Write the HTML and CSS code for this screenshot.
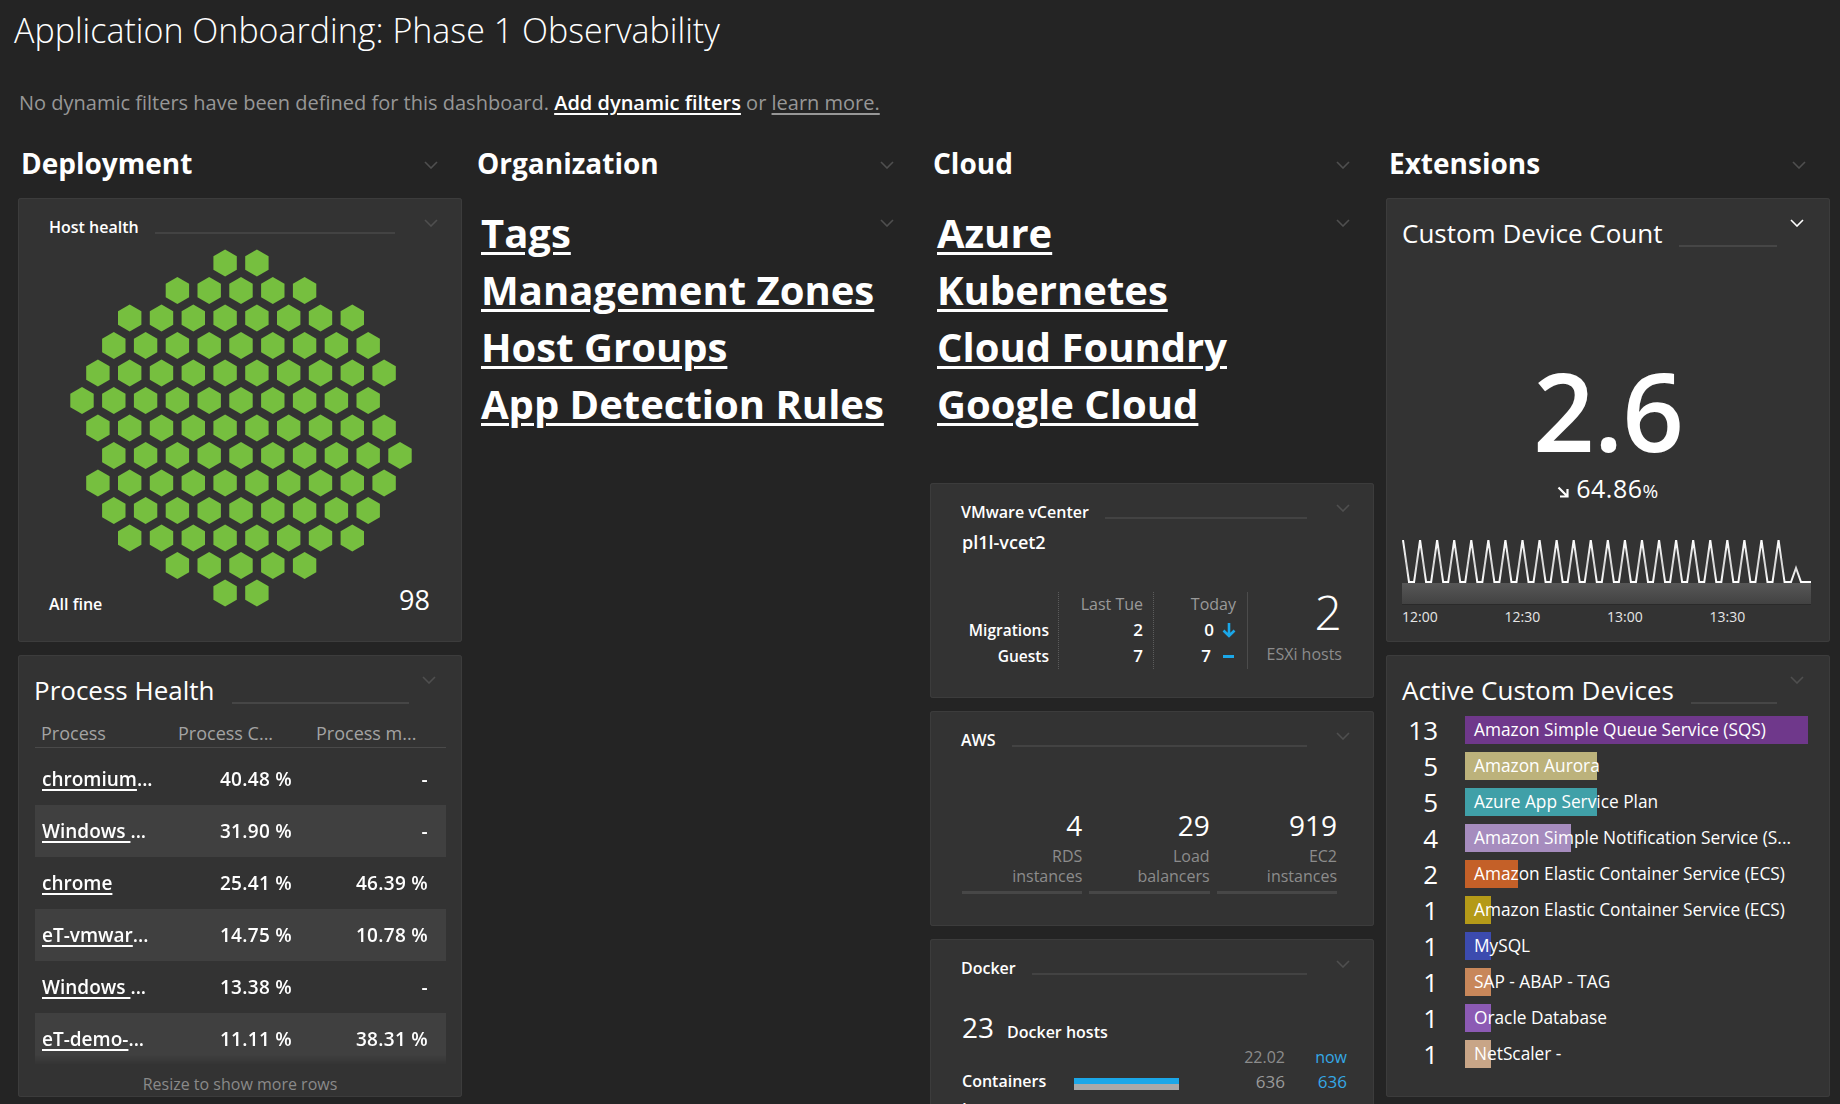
FILE: index.html
```html
<!DOCTYPE html>
<html lang="en">
<head>
<meta charset="utf-8">
<title>Application Onboarding: Phase 1 Observability</title>
<link rel="stylesheet" href="styles.css">
</head>
<body>
<header class="top">
  <h1 class="dash-title">Application Onboarding: Phase 1 Observability</h1>
  <p class="filters">No dynamic filters have been defined for this dashboard. <a class="lnk-strong" href="#">Add dynamic filters</a> or <a class="lnk-muted" href="#">learn more.</a></p>
</header>

<main class="board">
  <!-- Deployment -->
  <section class="col">
    <div class="col-head"><h2>Deployment</h2><svg class="chev" viewBox="0 0 14 8"><polyline points="1,1 7,7 13,1"/></svg></div>

    <div class="tile tile-hh">
      <div class="head-sm"><span class="t">Host health</span><span class="rule"></span><svg class="chev" viewBox="0 0 14 8"><polyline points="1,1 7,7 13,1"/></svg></div>
      <svg class="hexes" viewBox="0 0 444 444" width="444" height="444">
        <defs>
          <polygon id="h" points="0,-13.5 11.7,-6.75 11.7,6.75 0,13.5 -11.7,6.75 -11.7,-6.75"/>
          <g id="ra"><use href="#h" x="143.1"/><use href="#h" x="174.9"/></g>
          <g id="rb"><use href="#h" x="95.4"/><use href="#h" x="127.2"/><use href="#h" x="159"/><use href="#h" x="190.8"/><use href="#h" x="222.6"/></g>
          <g id="rc"><use href="#h" x="47.7"/><use href="#h" x="79.5"/><use href="#h" x="111.3"/><use href="#h" x="143.1"/><use href="#h" x="174.9"/><use href="#h" x="206.7"/><use href="#h" x="238.5"/><use href="#h" x="270.3"/></g>
          <g id="rd"><use href="#h" x="31.8"/><use href="#h" x="63.6"/><use href="#h" x="95.4"/><use href="#h" x="127.2"/><use href="#h" x="159"/><use href="#h" x="190.8"/><use href="#h" x="222.6"/><use href="#h" x="254.4"/><use href="#h" x="286.2"/></g>
          <g id="re"><use href="#h" x="15.9"/><use href="#h" x="47.7"/><use href="#h" x="79.5"/><use href="#h" x="111.3"/><use href="#h" x="143.1"/><use href="#h" x="174.9"/><use href="#h" x="206.7"/><use href="#h" x="238.5"/><use href="#h" x="270.3"/><use href="#h" x="302.1"/></g>
        </defs>
        <g transform="translate(64 65)" fill="#76bf3f">
          <use href="#ra"/>
          <use href="#rb" y="27.5"/>
          <use href="#rc" y="55"/>
          <use href="#rd" y="82.5"/>
          <use href="#re" y="110"/>
          <use href="#rd" y="137.5"/><use href="#h" x="0" y="137.5"/>
          <use href="#re" y="165"/>
          <use href="#rd" y="192.5"/><use href="#h" x="318" y="192.5"/>
          <use href="#re" y="220"/>
          <use href="#rd" y="247.5"/>
          <use href="#rc" y="275"/>
          <use href="#rb" y="302.5"/>
          <use href="#ra" y="330"/>
        </g>
      </svg>
      <div class="hh-foot"><span class="hh-state">All fine</span><span class="hh-count">98</span></div>
    </div>

    <div class="tile tile-ph">
      <div class="head-lg"><span class="t">Process Health</span><span class="rule"></span><svg class="chev" viewBox="0 0 14 8"><polyline points="1,1 7,7 13,1"/></svg></div>
      <div class="ptable">
        <div class="prow phead"><span>Process</span><span>Process C...</span><span>Process m...</span></div>
        <div class="pbody">
          <div class="prow"><span class="pname"><a href="#">chromium</a>...</span><span class="num">40.48 %</span><span class="num">-</span></div>
          <div class="prow"><span class="pname"><a href="#">Windows </a>...</span><span class="num">31.90 %</span><span class="num">-</span></div>
          <div class="prow"><span class="pname"><a href="#">chrome</a></span><span class="num">25.41 %</span><span class="num">46.39 %</span></div>
          <div class="prow"><span class="pname"><a href="#">eT-vmwar</a>...</span><span class="num">14.75 %</span><span class="num">10.78 %</span></div>
          <div class="prow"><span class="pname"><a href="#">Windows </a>...</span><span class="num">13.38 %</span><span class="num">-</span></div>
          <div class="prow"><span class="pname"><a href="#">eT-demo-</a>...</span><span class="num">11.11 %</span><span class="num">38.31 %</span></div>
        </div>
      </div>
      <div class="ph-note">Resize to show more rows</div>
    </div>
  </section>

  <!-- Organization -->
  <section class="col">
    <div class="col-head"><h2>Organization</h2><svg class="chev" viewBox="0 0 14 8"><polyline points="1,1 7,7 13,1"/></svg></div>
    <div class="md">
      <svg class="chev" viewBox="0 0 14 8"><polyline points="1,1 7,7 13,1"/></svg>
      <div class="md-links">
        <div><a href="#">Tags</a></div>
        <div><a href="#">Management Zones</a></div>
        <div><a href="#">Host Groups</a></div>
        <div><a href="#">App Detection Rules</a></div>
      </div>
    </div>
  </section>

  <!-- Cloud -->
  <section class="col">
    <div class="col-head"><h2>Cloud</h2><svg class="chev" viewBox="0 0 14 8"><polyline points="1,1 7,7 13,1"/></svg></div>
    <div class="md">
      <svg class="chev" viewBox="0 0 14 8"><polyline points="1,1 7,7 13,1"/></svg>
      <div class="md-links">
        <div><a href="#">Azure</a></div>
        <div><a href="#">Kubernetes</a></div>
        <div><a href="#">Cloud Foundry</a></div>
        <div><a href="#">Google Cloud</a></div>
      </div>
    </div>

    <div class="tile tile-sm">
      <div class="head-sm"><span class="t">VMware vCenter</span><span class="rule"></span><svg class="chev" viewBox="0 0 14 8"><polyline points="1,1 7,7 13,1"/></svg></div>
      <div class="vm-name">pl1l-vcet2</div>
      <div class="vm-grid">
        <div class="vm-c c1"><span class="vh"></span><span class="vl">Migrations</span><span class="vl">Guests</span></div>
        <div class="vm-c c2"><span class="vh">Last Tue</span><span class="vv">2</span><span class="vv">7</span></div>
        <div class="vm-c c3"><span class="vh">Today</span><span class="vv">0<svg class="arr" viewBox="0 0 14 16"><path d="M7 1v13M1.5 8.5L7 14l5.5-5.5"/></svg></span><span class="vv">7<i class="dash"></i></span></div>
        <div class="vm-c c4"><span class="vbig">2</span><span class="vsub">ESXi hosts</span></div>
      </div>
    </div>

    <div class="tile tile-sm">
      <div class="head-sm"><span class="t">AWS</span><span class="rule"></span><svg class="chev" viewBox="0 0 14 8"><polyline points="1,1 7,7 13,1"/></svg></div>
      <div class="aws-grid">
        <div class="aws-cell"><div class="aws-val">4</div><div class="aws-lbl">RDS<br>instances</div></div>
        <div class="aws-cell"><div class="aws-val">29</div><div class="aws-lbl">Load<br>balancers</div></div>
        <div class="aws-cell"><div class="aws-val">919</div><div class="aws-lbl">EC2<br>instances</div></div>
      </div>
    </div>

    <div class="tile tile-dk">
      <div class="head-sm"><span class="t">Docker</span><span class="rule"></span><svg class="chev" viewBox="0 0 14 8"><polyline points="1,1 7,7 13,1"/></svg></div>
      <div class="dk-sum"><span class="dk-n">23</span><span class="dk-l">Docker hosts</span></div>
      <div class="dk-grid">
        <span></span><span></span><span></span><span class="dk-h">22.02</span><span class="dk-h now">now</span>
        <span class="dk-lbl">Containers</span><span class="dk-bar"></span><span></span><span class="dk-v">636</span><span class="dk-v now">636</span>
        <span class="dk-lbl dk-next">Images</span>
      </div>
    </div>
  </section>

  <!-- Extensions -->
  <section class="col">
    <div class="col-head"><h2>Extensions</h2><svg class="chev" viewBox="0 0 14 8"><polyline points="1,1 7,7 13,1"/></svg></div>

    <div class="tile tile-cdc">
      <div class="head-lg"><span class="t">Custom Device Count</span><span class="rule"></span><svg class="chev chev-on" viewBox="0 0 14 8"><polyline points="1,1 7,7 13,1"/></svg></div>
      <div class="cdc-value">2.6</div>
      <div class="cdc-change"><svg class="se" viewBox="0 0 12 12"><path d="M1.5 1.5l9 9M10.5 3v7.5H3"/></svg><span>64.86<small>%</small></span></div>
      <svg class="spark" viewBox="0 0 409 66" width="409" height="66">
        <defs>
          <linearGradient id="fillg" x1="0" y1="0" x2="0" y2="1">
            <stop offset="0" stop-color="#575757"/>
            <stop offset="1" stop-color="#424242"/>
          </linearGradient>
          <linearGradient id="lineg" x1="0" y1="0" x2="0" y2="42" gradientUnits="userSpaceOnUse">
            <stop offset="0" stop-color="#ffffff"/>
            <stop offset="0.6" stop-color="#d4d4d4"/>
            <stop offset="1" stop-color="#ffffff"/>
          </linearGradient>
        </defs>
        <rect x="0" y="43" width="409" height="21" fill="url(#fillg)"/>
        <line x1="0" y1="64.5" x2="409" y2="64.5" stroke="#2a2a2a" stroke-width="1"/>
        <path d="M1 0L7 42h5.07l6-42l6 42h5.07l6-42l6 42h5.07l6-42l6 42h5.07l6-42l6 42h5.07l6-42l6 42h5.07l6-42l6 42h5.07l6-42l6 42h5.07l6-42l6 42h5.07l6-42l6 42h5.07l6-42l6 42h5.07l6-42l6 42h5.07l6-42l6 42h5.07l6-42l6 42h5.07l6-42l6 42h5.07l6-42l6 42h5.07l6-42l6 42h5.07l6-42l6 42h5.07l6-42l6 42h5.07l6-42l6 42h5.07l6-42l6 42h5.07l6-42l6 42h5.07l6-42l6 42h6.46l5-14l5 14h10" fill="none" stroke="url(#lineg)" stroke-width="2" stroke-linejoin="miter"/>
      </svg>
      <div class="axis"><span>12:00</span><span>12:30</span><span>13:00</span><span>13:30</span></div>
    </div>

    <div class="tile tile-acd">
      <div class="head-lg"><span class="t">Active Custom Devices</span><span class="rule"></span><svg class="chev" viewBox="0 0 14 8"><polyline points="1,1 7,7 13,1"/></svg></div>
      <div class="devs">
        <div class="dev"><span class="dev-n">13</span><span class="dev-bar" style="--w:100%;--c:#6f388b">Amazon Simple Queue Service (SQS)</span></div>
        <div class="dev"><span class="dev-n">5</span><span class="dev-bar" style="--w:38.46%;--c:#bcb27b">Amazon Aurora</span></div>
        <div class="dev"><span class="dev-n">5</span><span class="dev-bar" style="--w:38.46%;--c:#40a0a8">Azure App Service Plan</span></div>
        <div class="dev"><span class="dev-n">4</span><span class="dev-bar" style="--w:30.77%;--c:#a68cbe">Amazon Simple Notification Service (S...</span></div>
        <div class="dev"><span class="dev-n">2</span><span class="dev-bar" style="--w:15.38%;--c:#c46028">Amazon Elastic Container Service (ECS)</span></div>
        <div class="dev"><span class="dev-n">1</span><span class="dev-bar" style="--w:7.69%;--c:#b49a18">Amazon Elastic Container Service (ECS)</span></div>
        <div class="dev"><span class="dev-n">1</span><span class="dev-bar" style="--w:7.69%;--c:#3c4baf">MySQL</span></div>
        <div class="dev"><span class="dev-n">1</span><span class="dev-bar" style="--w:7.69%;--c:#c8875a">SAP - ABAP - TAG</span></div>
        <div class="dev"><span class="dev-n">1</span><span class="dev-bar" style="--w:7.69%;--c:#8c5ab4">Oracle Database</span></div>
        <div class="dev"><span class="dev-n">1</span><span class="dev-bar" style="--w:7.69%;--c:#c8a587">NetScaler -</span></div>
      </div>
    </div>
  </section>
</main>
</body>
</html>
```

FILE: styles.css
```css
* { box-sizing: border-box; }

html, body { height: 100%; }

body {
  margin: 0;
  background: #242424;
  color: #ffffff;
  font-family: "Open Sans", "Noto Sans", "DejaVu Sans", sans-serif;
  overflow: hidden;
}

a { color: inherit; }

/* ---------- top header ---------- */
.top { padding: 8px 0 0 14px; }

.dash-title {
  margin: 0;
  font-size: 34px;
  font-weight: 300;
  line-height: 44px;
  color: #ffffff;
}

.filters {
  margin: 38px 0 0 5px;
  font-size: 20px;
  line-height: 26px;
  color: #979797;
}

.lnk-strong {
  color: #ffffff;
  font-weight: 600;
  text-decoration: underline;
  text-decoration-thickness: 2px;
  text-underline-offset: 3px;
}

.lnk-muted {
  color: #979797;
  text-decoration: underline;
  text-decoration-thickness: 2px;
  text-underline-offset: 3px;
}

/* ---------- board ---------- */
.board {
  display: grid;
  grid-template-columns: repeat(4, 444px);
  column-gap: 12px;
  padding-left: 18px;
  margin-top: 29px;
  align-items: start;
}

.col {
  display: flex;
  flex-direction: column;
  gap: 13px;
}

.col-head {
  display: flex;
  align-items: center;
  justify-content: space-between;
  height: 36px;
  padding: 0 24px 0 3px;
  margin-bottom: 4px;
}

.col-head h2 {
  margin: 0;
  font-size: 28px;
  font-weight: 700;
  line-height: 36px;
}

.col-head .chev { margin-top: 4px; }

.chev {
  width: 14px;
  height: 8px;
  flex: none;
  fill: none;
  stroke: #4f4f4f;
  stroke-width: 1.6;
}

.chev-on { stroke: #ffffff; }

/* ---------- tiles ---------- */
.tile {
  background: #333333;
  border-radius: 3px;
  box-shadow: inset 0 0 0 1px #3c3c3c;
  overflow: hidden;
}

.head-sm {
  display: flex;
  align-items: center;
  height: 24px;
  margin-top: 17px;
  padding: 0 24px 0 31px;
}

.head-sm .t {
  font-size: 16px;
  font-weight: 600;
  line-height: 24px;
  white-space: nowrap;
}

.head-sm .rule {
  flex: 1;
  height: 2px;
  background: #434343;
  margin: 12px 29px 0 16px;
}

.head-sm .chev { margin-bottom: 8px; }

.head-lg {
  display: flex;
  align-items: center;
  height: 40px;
  margin-top: 15px;
  padding: 0 26px 0 16px;
}

.head-lg .t {
  font-size: 26px;
  font-weight: 400;
  line-height: 40px;
  white-space: nowrap;
}

.head-lg .rule {
  flex: 1;
  height: 2px;
  background: #464646;
  margin: 26px 13px 0 17px;
}

.head-lg .chev { margin-bottom: 20px; }

/* host health */
.tile-hh {
  height: 444px;
  display: grid;
  grid-template-columns: 444px;
  grid-template-rows: 444px;
}

.tile-hh > * { grid-area: 1 / 1; }

.tile-hh .head-sm { align-self: start; }

.hexes { display: block; }

.hh-foot {
  align-self: end;
  display: flex;
  justify-content: space-between;
  align-items: baseline;
  padding: 0 32px 0 31px;
  margin-bottom: 26px;
}

.hh-state {
  font-size: 16px;
  font-weight: 600;
  line-height: 24px;
}

.hh-count {
  font-size: 27px;
  font-weight: 400;
  line-height: 30px;
}

/* process health */
.tile-ph { height: 442px; }

.ptable { padding: 0 16px 0 17px; margin-top: 8px; }

.prow {
  display: grid;
  grid-template-columns: 137px 138px 136px;
  align-items: center;
  height: 52px;
}

.phead {
  height: 30px;
  border-bottom: 1px solid #4a4a4a;
  color: #a3a3a3;
  font-size: 18px;
  line-height: 30px;
}

.phead span { padding-left: 6px; white-space: nowrap; }

.pbody {
  margin-top: 5px;
  -webkit-mask-image: linear-gradient(to bottom, #000 calc(100% - 10px), transparent);
  mask-image: linear-gradient(to bottom, #000 calc(100% - 10px), transparent);
}

.pbody .prow:nth-child(even) { background: #404040; }

.pbody .prow span {
  font-size: 19px;
  font-weight: 600;
  white-space: nowrap;
}

.pname { padding-left: 7px; }

.pname a {
  text-decoration: underline;
  text-decoration-thickness: 2px;
  text-underline-offset: 3px;
}

.num { text-align: right; padding-right: 18px; letter-spacing: 0.3px; }

.ph-note {
  margin-top: 8px;
  text-align: center;
  font-size: 16px;
  line-height: 22px;
  color: #8a8a8a;
}

/* markdown tiles */
.md {
  height: 272px;
  padding: 6px 0 0 7px;
}

.md .chev {
  float: right;
  margin: 15px 24px 0 0;
}

.md-links {
  font-size: 40px;
  font-weight: 700;
  line-height: 57px;
}

.md-links a {
  color: #ffffff;
  text-decoration: underline;
  text-decoration-thickness: 3px;
  text-underline-offset: 4px;
}

/* small tiles */
.tile-sm { height: 215px; }

.vm-name {
  padding-left: 32px;
  margin-top: 6px;
  font-size: 18px;
  font-weight: 600;
  line-height: 24px;
}

.vm-grid {
  display: flex;
  padding: 0 32px 0 32px;
  margin-top: 38px;
}

.vm-c {
  display: flex;
  flex-direction: column;
  align-items: flex-end;
}

.vh {
  height: 25px;
  line-height: 25px;
  font-size: 16px;
  color: #9a9a9a;
  white-space: nowrap;
}

.vl, .vv {
  height: 26px;
  line-height: 26px;
  font-size: 16px;
  font-weight: 600;
  white-space: nowrap;
  display: flex;
  align-items: center;
}

.vl { font-size: 15.5px; }
.vv { font-size: 17px; }

.c1 { width: 97px; padding-right: 9px; border-right: 1px dotted #5c5c5c; }
.c2 { width: 95px; padding-right: 10px; border-right: 1px dotted #5c5c5c; }
.c3 { width: 94px; padding-right: 11px; border-right: 1px solid #4c4c4c; }
.c4 { flex: 1; }

.arr {
  width: 14px;
  height: 16px;
  margin-left: 8px;
  fill: none;
  stroke: #1ba7e8;
  stroke-width: 2.6;
}

.dash {
  display: inline-block;
  width: 11px;
  height: 3px;
  margin-left: 12px;
  margin-right: 2px;
  background: #1ba7e8;
}

.vbig {
  font-size: 48px;
  font-weight: 300;
  line-height: 44px;
  margin-top: -2px;
}

.vsub {
  margin-top: 8px;
  font-size: 16px;
  line-height: 24px;
  color: #8c8c8c;
  white-space: nowrap;
}

.aws-grid {
  display: grid;
  grid-template-columns: repeat(3, 1fr);
  column-gap: 7px;
  padding: 0 37px 0 32px;
  margin-top: 56px;
}

.aws-cell {
  text-align: right;
  border-bottom: 3px solid #474747;
  padding-bottom: 5px;
}

.aws-val {
  font-size: 28px;
  line-height: 34px;
}

.aws-lbl {
  margin-top: 4px;
  font-size: 16px;
  line-height: 20px;
  color: #8c8c8c;
}

/* docker */
.tile-dk { height: 300px; }

.dk-sum {
  display: flex;
  align-items: baseline;
  gap: 13px;
  padding-left: 32px;
  margin-top: 30px;
}

.dk-n { font-size: 28px; line-height: 34px; }
.dk-l { font-size: 16px; font-weight: 600; line-height: 24px; }

.dk-grid {
  display: grid;
  grid-template-columns: 112px 105px 1fr 60px 62px;
  grid-auto-rows: 24px;
  align-items: center;
  padding: 0 27px 0 32px;
  margin-top: 1px;
}

.dk-h {
  text-align: right;
  font-size: 16px;
  color: #8c8c8c;
}

.dk-lbl { font-size: 16px; font-weight: 600; }

.dk-next { padding-top: 8px; }

.dk-bar {
  height: 12px;
  margin-top: 6px;
  background: linear-gradient(#1ba7e8 50%, #a9a9a9 50%);
}

.dk-v {
  text-align: right;
  font-size: 17px;
  color: #9a9a9a;
}

.now { color: #35a8e6; }

/* custom device count */
.tile-cdc { height: 444px; }

.cdc-value {
  margin-top: 104px;
  text-align: center;
  font-size: 108px;
  font-weight: 600;
  line-height: 108px;
  letter-spacing: -1px;
}

.cdc-change {
  display: flex;
  justify-content: center;
  align-items: center;
  gap: 7px;
  margin-top: 9px;
  font-size: 25px;
  line-height: 28px;
  letter-spacing: 0.5px;
}

.cdc-change small { font-size: 19px; }

.se {
  width: 12px;
  height: 12px;
  fill: none;
  stroke: #ffffff;
  stroke-width: 2.2;
  margin-top: 4px;
}

.spark {
  display: block;
  margin: 35px 0 0 16px;
}

.axis {
  display: grid;
  grid-template-columns: repeat(4, 102.5px);
  padding-left: 16px;
  margin-top: 1px;
  font-size: 14px;
  line-height: 20px;
  color: #e6e6e6;
}

/* active custom devices */
.tile-acd { height: 442px; }

.devs { margin-top: 6px; }

.dev {
  display: grid;
  grid-template-columns: 52px 343px;
  column-gap: 27px;
  height: 28px;
  margin-bottom: 8px;
  align-items: center;
}

.dev-n {
  text-align: right;
  font-size: 26px;
  line-height: 28px;
}

.dev-bar {
  height: 28px;
  line-height: 28px;
  padding-left: 9px;
  font-size: 17.3px;
  white-space: nowrap;
  overflow: hidden;
  text-overflow: ellipsis;
  background: linear-gradient(to right, var(--c) var(--w), transparent var(--w));
}
```
